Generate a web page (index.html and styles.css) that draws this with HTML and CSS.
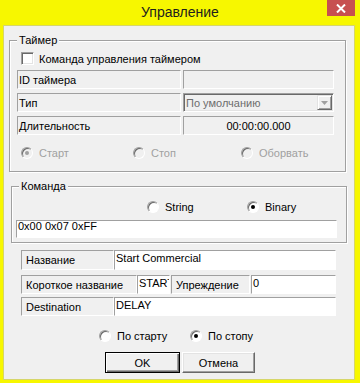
FILE: index.html
```html
<!DOCTYPE html>
<html>
<head>
    <title>Управление</title>
    <link rel="stylesheet" href="styles.css">
</head>
<body>
    <div class="window">
        <div class="titlebar">
            <span></span>
            <span class="title">Управление</span>
            <span class="close">
                <svg width="10" height="9" viewBox="0 0 10 9"><path d="M1 0.5 L9 8.5 M9 0.5 L1 8.5" stroke="#fff" stroke-width="2"/></svg>
            </span>
        </div>
        <div class="client">
            <fieldset class="group timer">
                <legend>Таймер</legend>
                <div class="check-row">
                    <span class="checkbox"></span>
                    <span>Команда управления таймером</span>
                </div>
                <div class="prop-row">
                    <span class="cap">ID таймера</span>
                    <span class="box"></span>
                </div>
                <div class="prop-row">
                    <span class="cap">Тип</span>
                    <span class="combo">
                        <span class="combo-text">По умолчанию</span>
                        <span class="combo-btn">
                            <svg width="7" height="4" viewBox="0 0 7 4"><path d="M0 0 H7 L3.5 4 Z" fill="#a0a0a0"/></svg>
                        </span>
                    </span>
                </div>
                <div class="prop-row">
                    <span class="cap">Длительность</span>
                    <span class="box value">00:00:00.000</span>
                </div>
                <div class="opts timer-opts disabled">
                    <span class="opt"><span class="radio on"></span>Старт</span>
                    <span class="opt"><span class="radio"></span>Стоп</span>
                    <span class="opt"><span class="radio"></span>Оборвать</span>
                </div>
            </fieldset>

            <fieldset class="group command">
                <legend>Команда</legend>
                <div class="opts cmd-opts">
                    <span class="opt"><span class="radio"></span>String</span>
                    <span class="opt"><span class="radio on"></span>Binary</span>
                </div>
                <div class="edit cmd-edit">0x00 0x07 0xFF</div>
            </fieldset>

            <div class="fields">
                <div class="field-row row-name">
                    <span class="cap w93">Название</span>
                    <span class="edit w222">Start Commercial</span>
                </div>
                <div class="field-row row-short">
                    <span class="cap w116">Короткое название</span>
                    <span class="edit w33">START</span>
                    <span class="cap w79 lead">Упреждение</span>
                    <span class="edit w85 lead">0</span>
                </div>
                <div class="field-row row-dest">
                    <span class="cap w93">Destination</span>
                    <span class="edit w222">DELAY</span>
                </div>
            </div>

            <div class="opts ss-opts">
                <span class="opt"><span class="radio"></span>По старту</span>
                <span class="opt"><span class="radio on"></span>По стопу</span>
            </div>

            <div class="buttons">
                <button class="btn default">OK</button>
                <button class="btn cancel">Отмена</button>
            </div>
        </div>
    </div>
</body>
</html>
```

FILE: styles.css
```css
body {
    margin: 0;
    font-family: "Liberation Sans", Arial, sans-serif;
    font-size: 11px;
    color: #000;
}

.window {
    width: 360px;
    height: 383px;
    background: #f7f700;
    display: flex;
    flex-direction: column;
}

.titlebar {
    height: 25px;
    display: grid;
    grid-template-columns: 1fr auto 1fr;
    align-items: start;
}

.title {
    font-size: 14px;
    line-height: 24px;
    color: #1e1e1e;
}

.close {
    justify-self: end;
    width: 28px;
    height: 16px;
    margin-right: 5px;
    background: #c75050;
    display: flex;
    align-items: center;
    justify-content: center;
}

.client {
    flex: 1;
    margin: 0 5px 3px 3px;
    background: #f0f0f0;
    border: 1px solid #d6d66a;
}

/* group boxes */
.group {
    box-sizing: border-box;
    min-width: 0;
    padding: 0;
    border: 1px solid #a0a0a0;
    box-shadow: inset 1px 1px #fff, 1px 1px #fff;
}

.group legend {
    margin-left: 7px;
    padding: 0 2px;
    line-height: 13px;
    background: #f0f0f0;
}

.timer {
    width: 337px;
    margin: 8px 0 0 5px;
    padding-bottom: 12px;
}

.command {
    width: 336px;
    margin: 8px 0 0 7px;
    padding-bottom: 4px;
}

.check-row {
    display: flex;
    align-items: center;
    gap: 5px;
    height: 15px;
    margin: 4px 0 0 11px;
}

.checkbox {
    box-sizing: border-box;
    width: 13px;
    height: 13px;
    background: #fff;
    border: 1px solid;
    border-color: #a0a0a0 #fff #fff #a0a0a0;
    box-shadow: inset 1px 1px #696969, inset -1px -1px #e3e3e3;
}

.prop-row {
    display: flex;
    gap: 2px;
    height: 19px;
    margin: 4px 0 0 7px;
}

.cap {
    box-sizing: border-box;
    display: flex;
    align-items: center;
    padding-left: 1px;
    white-space: nowrap;
    overflow: hidden;
    border: 1px solid;
    border-color: #a0a0a0 #fff #fff #a0a0a0;
}

.prop-row .cap {
    width: 164px;
}

.box {
    box-sizing: border-box;
    width: 151px;
    border: 1px solid;
    border-color: #a0a0a0 #fff #fff #a0a0a0;
}

.box.value {
    display: flex;
    align-items: center;
    justify-content: center;
}

.combo {
    box-sizing: border-box;
    width: 151px;
    display: flex;
    align-items: stretch;
    padding: 1px;
    border: 1px solid;
    border-color: #a0a0a0 #fff #fff #a0a0a0;
    box-shadow: inset 1px 1px #696969, inset -1px -1px #e3e3e3;
}

.combo-text {
    flex: 1;
    display: flex;
    align-items: center;
    padding-left: 1px;
    color: #6d6d6d;
}

.combo-btn {
    box-sizing: border-box;
    width: 15px;
    display: flex;
    align-items: center;
    justify-content: center;
    border: 1px solid;
    border-color: #e3e3e3 #696969 #696969 #e3e3e3;
    box-shadow: inset 1px 1px #fff, inset -1px -1px #a0a0a0;
}

/* radio buttons */
.opts {
    display: grid;
    align-items: center;
    height: 13px;
}

.opt {
    display: flex;
    align-items: center;
    gap: 6px;
}

.radio {
    box-sizing: border-box;
    width: 12px;
    height: 12px;
    border-radius: 50%;
    background: #fff;
    border: 1px solid;
    border-color: #a0a0a0 #fff #fff #a0a0a0;
    box-shadow: inset 1px 1px #696969;
    display: flex;
    align-items: center;
    justify-content: center;
}

.radio.on::after {
    content: "";
    width: 4px;
    height: 4px;
    border-radius: 50%;
    background: #000;
}

.disabled {
    color: #a0a0a0;
}

.disabled .radio {
    background: #f0f0f0;
}

.disabled .radio.on::after {
    background: #a0a0a0;
}

.timer-opts {
    grid-template-columns: 112px 108px auto;
    margin: 11px 0 0 11px;
}

.cmd-opts {
    grid-template-columns: 100px auto;
    margin: 7px 0 0 135px;
}

.ss-opts {
    grid-template-columns: 91px auto;
    margin: 13px 0 0 95px;
}

/* edit fields */
.edit {
    box-sizing: border-box;
    background: #fff;
    padding: 1px;
    line-height: 13px;
    white-space: nowrap;
    overflow: hidden;
    border: 1px solid;
    border-color: #a0a0a0 #fff #fff #a0a0a0;
}

.cmd-edit {
    width: 321px;
    height: 18px;
    margin: 7px 0 0 4px;
    padding-top: 0;
    line-height: 11px;
}

.fields {
    margin-left: 17px;
}

.field-row {
    display: flex;
    height: 19px;
}

.fields .cap {
    padding-left: 4px;
}

.row-name {
    height: 20px;
    margin-top: 7px;
}

.row-short {
    margin-top: 5px;
}

.row-dest {
    margin-top: 3px;
}

.w93 { width: 93px; }
.w116 { width: 116px; }
.w33 { width: 33px; }
.w79 { width: 79px; }
.w85 { width: 85px; }
.w222 { width: 222px; }

.lead {
    margin-left: 1px;
}

/* buttons */
.buttons {
    display: flex;
    gap: 2px;
    margin: 10px 0 0 101px;
}

.btn {
    width: 75px;
    height: 21px;
    padding: 0;
    font: inherit;
    color: #000;
    background: #f0f0f0;
    border: 1px solid;
    border-color: #fff #696969 #696969 #fff;
    box-shadow: inset -1px -1px #a0a0a0, inset 1px 1px #e3e3e3;
}

.btn.default {
    border-color: #000;
    box-shadow: inset 1px 1px #fff, inset -1px -1px #696969, inset -2px -2px #a0a0a0;
}

.btn.cancel {
    width: 73px;
}
```
